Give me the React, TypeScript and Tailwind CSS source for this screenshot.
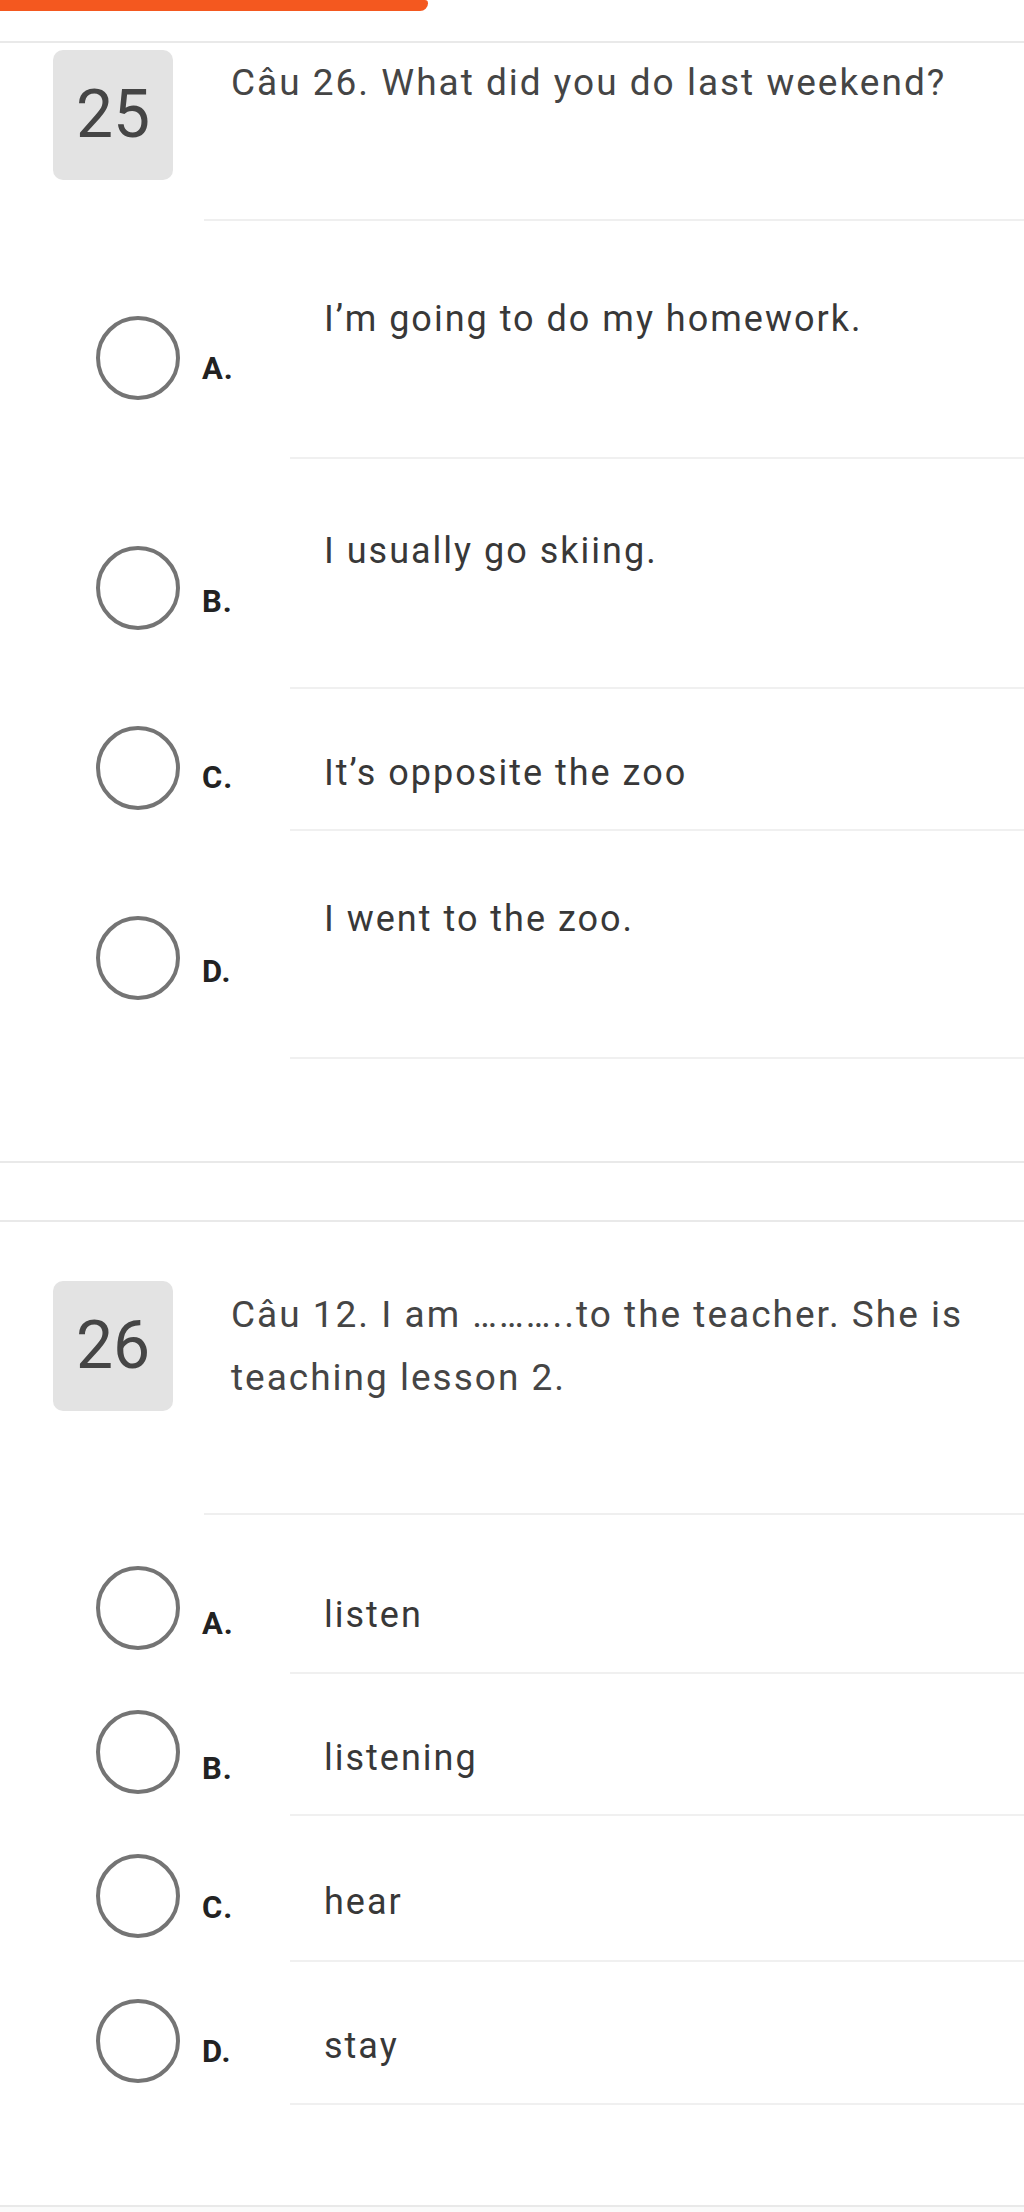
import React from "react";

type Opt = {
  label: string;
  text: string;
  cell: string;
  circle: string;
  lab: string;
};

const q1: Opt[] = [
  { label: "A.", text: "I’m going to do my homework.", cell: "pt-[74px] pb-[114px]", circle: "mt-[95px]", lab: "mt-[132px]" },
  { label: "B.", text: "I usually go skiing.", cell: "pt-[68px] pb-[112px]", circle: "mt-[87px]", lab: "mt-[127px]" },
  { label: "C.", text: "It’s opposite the zoo", cell: "pt-[60px] pb-[32px]", circle: "mt-[37px]", lab: "mt-[73px]" },
  { label: "D.", text: "I went to the zoo.", cell: "pt-[64px] pb-[114px]", circle: "mt-[85px]", lab: "mt-[125px]" },
];

const q2: Opt[] = [
  { label: "A.", text: "listen", cell: "pt-[76px] pb-[33px]", circle: "mt-[51px]", lab: "mt-[93px]" },
  { label: "B.", text: "listening", cell: "pt-[60px] pb-[32px]", circle: "mt-[36px]", lab: "mt-[79px]" },
  { label: "C.", text: "hear", cell: "pt-[62px] pb-[34px]", circle: "mt-[38px]", lab: "mt-[76px]" },
  { label: "D.", text: "stay", cell: "pt-[60px] pb-[33px]", circle: "mt-[37px]", lab: "mt-[74px]" },
];

function Option({ o }: { o: Opt }) {
  return (
    <div className="flex items-start">
      <div className="flex w-[290px] shrink-0 items-start pl-[96px]">
        <div className={`h-[84px] w-[84px] shrink-0 rounded-full border-4 border-[#747474] ${o.circle}`} />
        <span className={`ml-[22px] text-[31px] font-bold leading-[32px] tracking-[1px] text-[#222222] ${o.lab}`}>
          {o.label}
        </span>
      </div>
      <div
        className={`flex-1 border-b-2 border-[#f0f0f0] pl-[34px] text-[36px] leading-[48px] tracking-[2px] text-[#383838] ${o.cell}`}
      >
        {o.text}
      </div>
    </div>
  );
}

function Question({
  num,
  text,
  boxTop,
  cellPad,
}: {
  num: string;
  text: React.ReactNode;
  boxTop: string;
  cellPad: string;
}) {
  return (
    <div className="flex items-start">
      <div
        className={`ml-[53px] flex h-[130px] w-[120px] shrink-0 items-center justify-center rounded-[10px] bg-[#e3e3e3] text-[66px] leading-none text-[#454545] ${boxTop}`}
      >
        {num}
      </div>
      <div
        className={`ml-[31px] flex-1 border-b-2 border-[#efefef] pl-[27px] pr-6 text-[37px] leading-[63px] tracking-[2px] text-[#454545] ${cellPad}`}
      >
        {text}
      </div>
    </div>
  );
}

export default function App() {
  return (
    <div className="min-h-[2212px] w-[1024px] bg-white font-['Roboto',_sans-serif]">
      <div className="h-[43px] border-b-2 border-[#e9e9e9]">
        <div className="h-[11px] w-[428px] rounded-br-[10px] rounded-tr-[4px] bg-[#f4581f]" />
      </div>

      <div className="border-b-2 border-[#e9e9e9] pb-[102px]">
        <Question
          num="25"
          text="Câu 26. What did you do last weekend?"
          boxTop="mt-[7px]"
          cellPad="pt-[8px] pb-[105px]"
        />
        {q1.map((o) => (
          <Option key={o.label} o={o} />
        ))}
      </div>

      <div className="h-[57px]" />

      <div className="border-y-2 border-[#e9e9e9] pb-[100px]">
        <Question
          num="26"
          text="Câu 12. I am ………..to the teacher. She is teaching lesson 2."
          boxTop="mt-[59px]"
          cellPad="pt-[61px] pb-[104px]"
        />
        {q2.map((o) => (
          <Option key={o.label} o={o} />
        ))}
      </div>
      <div className="h-[7px] bg-[#fafafa]" />
    </div>
  );
}
